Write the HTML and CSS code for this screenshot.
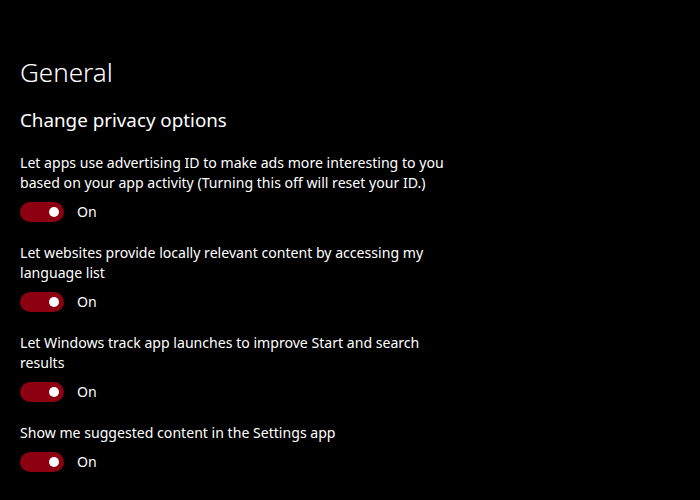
FILE: index.html
```html
<!DOCTYPE html>
<html>
<head>
<meta charset="utf-8">
<link rel="stylesheet" href="styles.css">
</head>
<body>
<main class="page">
  <h1 class="title">General</h1>
  <h2 class="subtitle">Change privacy options</h2>
  <section class="setting">
    <p class="desc">Let apps use advertising ID to make ads more interesting to you<br>based on your app activity (Turning this off will reset your ID.)</p>
    <div class="toggle-row"><span class="toggle"><span class="knob"></span></span><span class="state">On</span></div>
  </section>
  <section class="setting">
    <p class="desc">Let websites provide locally relevant content by accessing my<br>language list</p>
    <div class="toggle-row"><span class="toggle"><span class="knob"></span></span><span class="state">On</span></div>
  </section>
  <section class="setting">
    <p class="desc">Let Windows track app launches to improve Start and search<br>results</p>
    <div class="toggle-row"><span class="toggle"><span class="knob"></span></span><span class="state">On</span></div>
  </section>
  <section class="setting">
    <p class="desc">Show me suggested content in the Settings app</p>
    <div class="toggle-row"><span class="toggle"><span class="knob"></span></span><span class="state">On</span></div>
  </section>
</main>
</body>
</html>
```
FILE: styles.css
```css
html, body {
  margin: 0;
  padding: 0;
  background: #000;
}
body {
  width: 700px;
  height: 500px;
  overflow: hidden;
  color: #fff;
  font-family: "Noto Sans", "Open Sans", sans-serif;
}
.page {
  padding: 54px 0 0 20px;
}
.title {
  margin: 0;
  font-size: 26px;
  font-weight: 300;
  line-height: 36px;
}
.subtitle {
  margin: 16px 0 0;
  font-size: 18.8px;
  font-weight: 400;
  line-height: 28px;
}
.setting {
  margin-top: 18px;
}
.setting + .setting {
  margin-top: 20px;
}
.desc {
  margin: 0;
  padding-top: 1px;
  font-size: 14.1px;
  line-height: 20px;
  white-space: nowrap;
}
.toggle-row {
  display: flex;
  align-items: center;
  gap: 13px;
  margin-top: 9px;
  height: 20px;
}
.toggle {
  box-sizing: border-box;
  width: 44px;
  height: 20px;
  border-radius: 10px;
  background: #8c0012;
  display: flex;
  align-items: center;
  justify-content: flex-end;
  padding-right: 5px;
}
.knob {
  width: 10px;
  height: 10px;
  border-radius: 50%;
  background: #fff;
}
.state {
  font-size: 14.1px;
  line-height: 20px;
}
```
